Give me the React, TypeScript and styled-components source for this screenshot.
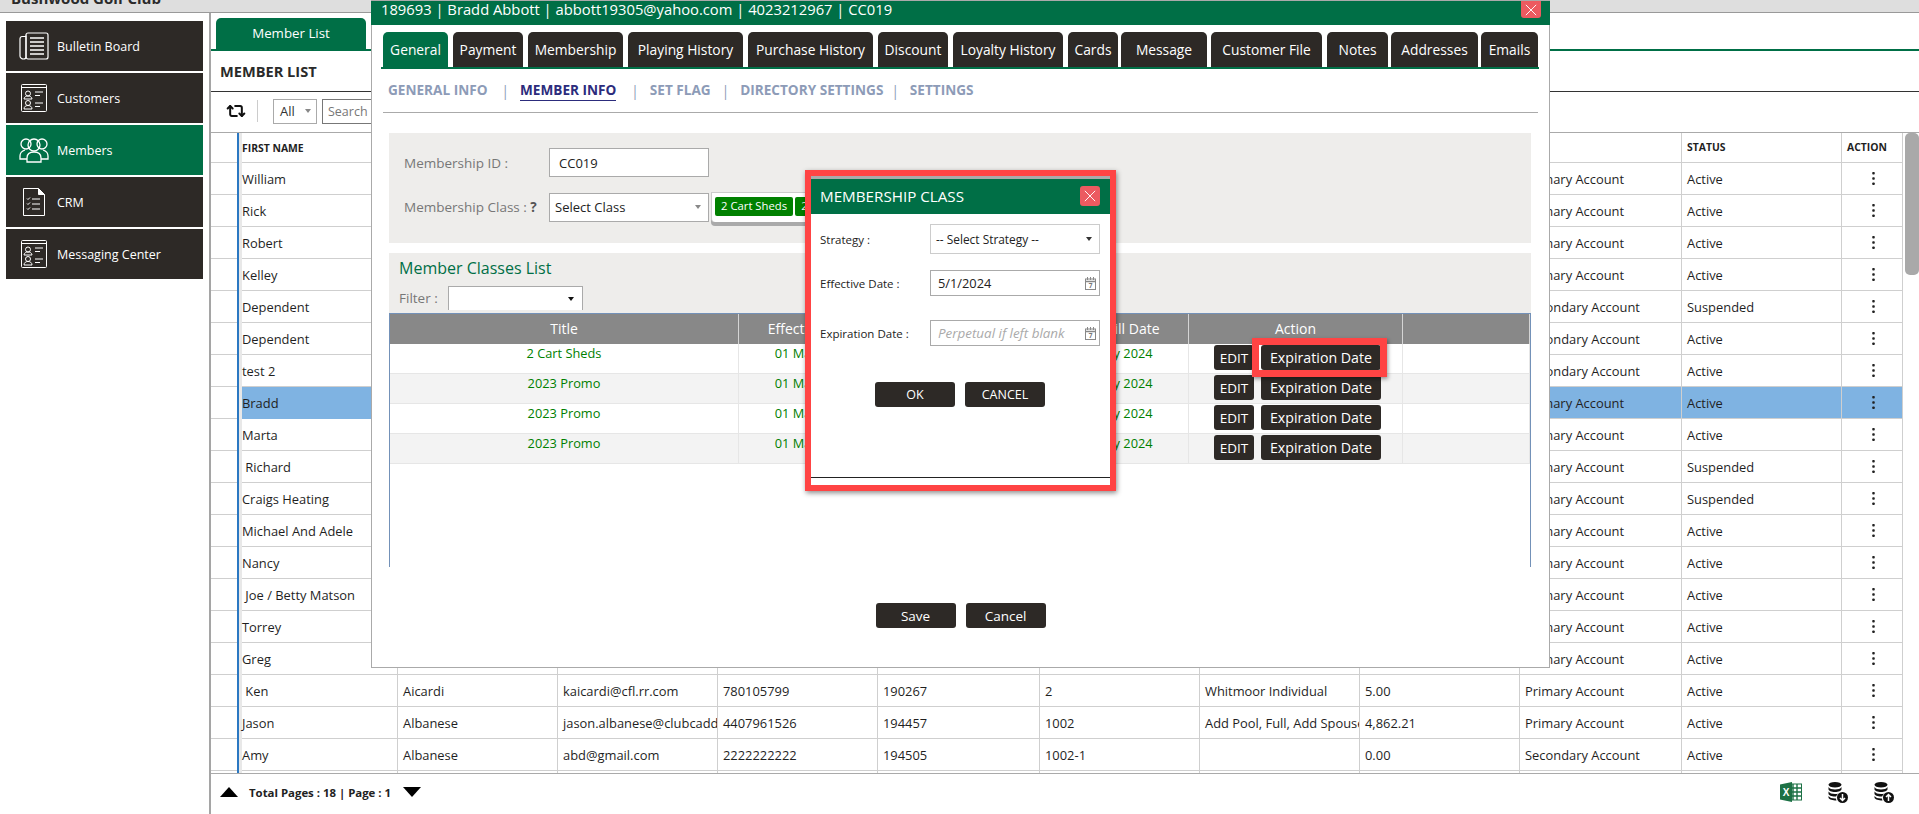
import React, { FC } from "react";
import styled, { createGlobalStyle } from "styled-components";
import { Repeat2 } from "lucide-react";

const GREEN = "#006f46";
const DARK = "#2d2926";
const FONT = `"Open Sans", "Noto Sans", "Liberation Sans", sans-serif`;

const GlobalStyle = createGlobalStyle`
  html, body {
    margin: 0;
    height: 100%;
    overflow: hidden;
    background: #fff;
    font-family: ${FONT};
    font-size: 13px;
    color: #222;
  }
  * { box-sizing: border-box; }
`;

//Page frame
const Page = styled.div`
  position: relative;
  width: 1919px;
  height: 814px;
  display: flex;
  flex-direction: column;
  overflow: hidden;
`;

const TopBar = styled.div`
  height: 13px;
  flex: none;
  background: #dedede;
  border-bottom: 1px solid #999;
  overflow: hidden;
  padding-left: 11px;
`;

const ClubName = styled.div`
  margin-top: -13px;
  line-height: 22px;
  font-size: 15px;
  font-weight: 700;
  color: #2a2a2a;
`;

const Body = styled.div`
  flex: 1;
  display: flex;
  min-height: 0;
`;

//Sidebar
const Sidebar = styled.nav`
  width: 209px;
  flex: none;
  padding: 8px 6px 0;
  display: flex;
  flex-direction: column;
  gap: 2px;
`;

const NavItem = styled.div<{ $active?: boolean }>`
  height: 50px;
  display: flex;
  align-items: center;
  background: ${(p) => (p.$active ? GREEN : DARK)};
  color: #fff;
  font-size: 12.5px;
`;

const NavIcon = styled.span`
  width: 51px;
  flex: none;
  display: flex;
  justify-content: center;
  padding-left: 5px;
`;

//Main list
const Main = styled.main`
  flex: 1;
  min-width: 0;
  display: flex;
  flex-direction: column;
  border-left: 2px solid #a5a5a5;
`;

const TabStrip = styled.div`
  height: 38px;
  flex: none;
  padding: 5px 0 0 5px;
  border-bottom: 2px solid ${GREEN};
`;

const ListTab = styled.div`
  width: 150px;
  height: 33px;
  background: ${GREEN};
  color: #fff;
  border-radius: 5px 5px 0 0;
  display: flex;
  align-items: center;
  justify-content: center;
  font-size: 13.3px;
  padding-bottom: 3px;
`;

const Heading = styled.h1`
  margin: 0;
  height: 41px;
  flex: none;
  padding: 0 0 1px 9px;
  display: flex;
  align-items: center;
  border-bottom: 1px solid #333;
  font-size: 14.6px;
  font-weight: 700;
  color: #2a2a2a;
`;

const Toolbar = styled.div`
  height: 41px;
  flex: none;
  display: flex;
  align-items: center;
  padding: 0 0 2px 15px;
  border-bottom: 1px solid #aaa;
`;

const ToolDivider = styled.span`
  width: 1px;
  height: 22px;
  background: #ccc;
  margin: 0 15px 0 11px;
`;

const AllSelect = styled.div`
  width: 44px;
  height: 25px;
  border: 1px solid #aaa;
  display: flex;
  align-items: center;
  justify-content: space-between;
  padding: 0 5px 0 6px;
  font-size: 13px;
  color: #333;
`;

const SmallCaret = styled.i<{ $color?: string }>`
  width: 0;
  height: 0;
  border-left: 3.5px solid transparent;
  border-right: 3.5px solid transparent;
  border-top: 4px solid ${(p) => p.$color || "#888"};
`;

const SearchBox = styled.div`
  width: 200px;
  height: 25px;
  margin-left: 5px;
  border: 1px solid #777;
  padding-left: 5px;
  font-size: 12.5px;
  line-height: 23px;
  color: #777;
`;

const GridArea = styled.div`
  height: 640px;
  flex: none;
  display: flex;
  overflow: hidden;
`;

const Grid = styled.div`
  width: 1692px;
  flex: none;
  overflow: hidden;
`;

const ScrollTrack = styled.div`
  flex: 1;
  padding-left: 2px;
`;

const ScrollThumb = styled.div`
  width: 14px;
  height: 142px;
  background: #a9a9a9;
  border-radius: 5px;
`;

const GridRow = styled.div<{ $header?: boolean }>`
  display: grid;
  grid-template-columns: 26px 161px 160px 160px 160px 162px 160px 160px 160px 162px 160px 61px;
  height: ${(p) => (p.$header ? "30px" : "32px")};
  border-bottom: 1px solid #cfcfcf;
  font-size: ${(p) => (p.$header ? "10.4px" : "12.9px")};
  font-weight: ${(p) => (p.$header ? 700 : 400)};
`;

const Gutter = styled.div``;

const GridCell = styled.div<{ $selected?: boolean; $header?: boolean }>`
  display: flex;
  align-items: center;
  padding-left: 5px;
  padding-bottom: ${(p) => (p.$header ? "1px" : 0)};
  border-right: 1px solid #cfcfcf;
  white-space: nowrap;
  overflow: hidden;
  color: #1f1f1f;
  background: ${(p) => (p.$selected ? "#7fb3e2" : "transparent")};
`;

const NameCell = styled(GridCell)`
  padding-left: 3px;
  border-left: 2px solid #2b78c2;
  box-shadow: inset 3px 0 0 #e8e8e8;
  margin-bottom: -1px;
`;

const ActionCell = styled(GridCell)`
  justify-content: center;
  padding: 0 0 1px 2px;
`;

const GridFooter = styled.footer`
  flex: 1;
  border-top: 1px solid #aaa;
  display: flex;
  align-items: center;
  padding: 0 25px 4px 9px;
`;

const Triangle = styled.i<{ $down?: boolean }>`
  width: 0;
  height: 0;
  border-left: 9px solid transparent;
  border-right: 9px solid transparent;
  ${(p) => (p.$down ? "border-top: 10px solid #000;" : "border-bottom: 10px solid #000;")}
`;

const PageInfo = styled.span`
  margin: 0 12px 0 11px;
  font-size: 11.4px;
  font-weight: 700;
  color: #222;
`;

const FooterIcons = styled.div`
  margin-left: auto;
  display: flex;
  align-items: center;
  gap: 26px;
`;

//Customer modal
const Modal = styled.section`
  position: absolute;
  left: 371px;
  top: 0;
  width: 1179px;
  height: 668px;
  background: #fff;
  border: 1px solid #aaa;
  display: flex;
  flex-direction: column;
`;

const ModalTitle = styled.header`
  height: 24px;
  flex: none;
  background: ${GREEN};
  color: #fff;
  font-size: 14.75px;
  display: flex;
  justify-content: space-between;
  padding: 0 9px 0 10px;
  line-height: 16px;
  margin: 0 -1px 0 -1px;
`;

const CloseButton = styled.button<{ $h: number }>`
  width: 20px;
  height: ${(p) => p.$h}px;
  padding: 0;
  border: 0;
  border-radius: 0 0 3px 3px;
  background: #ec5a60;
  display: flex;
  align-items: center;
  justify-content: center;
`;

const TabRow = styled.div`
  margin: 7px 10px 0 9px;
  padding-left: 2px;
  height: 37px;
  flex: none;
  display: flex;
  border-bottom: 2px solid ${GREEN};
`;

const ModalTab = styled.div<{ $w: number; $gap: number; $active?: boolean }>`
  width: ${(p) => p.$w}px;
  margin-right: ${(p) => p.$gap}px;
  height: 35px;
  flex: none;
  border-radius: 5px 5px 0 0;
  background: ${(p) => (p.$active ? GREEN : DARK)};
  color: #fff;
  font-size: 13.8px;
  display: flex;
  align-items: center;
  justify-content: center;
  white-space: nowrap;
`;

const SubNav = styled.div`
  margin: 0 11px 0 11px;
  height: 44px;
  flex: none;
  display: flex;
  align-items: center;
  border-bottom: 1px solid #aaa;
  padding: 0 0 1px 5px;
  font-size: 13.6px;
  font-weight: 700;
  color: #8d9bb7;
`;

const SubLink = styled.span<{ $active?: boolean }>`
  color: ${(p) => (p.$active ? "#2c2c7c" : "#8d9bb7")};
  padding-bottom: 1px;
  border-bottom: 1px solid ${(p) => (p.$active ? "#2c2c7c" : "transparent")};
`;

const SubSep = styled.span<{ $l: number; $r: number }>`
  margin: 0 ${(p) => p.$r}px 0 ${(p) => p.$l}px;
  font-weight: 400;
`;

const InfoPanel = styled.div`
  margin: 20px 0 0 17px;
  width: 1142px;
  height: 110px;
  flex: none;
  background: #eeedeb;
  padding: 15px 0 0 15px;
  display: flex;
  flex-direction: column;
  gap: 15px;
`;

const FormRow = styled.div`
  display: flex;
  align-items: center;
`;

const FormLabel = styled.label`
  width: 145px;
  flex: none;
  font-size: 13.5px;
  color: #777;
`;

const Strong = styled.b`
  color: #555;
`;

const TextBox = styled.div<{ $pad: number }>`
  width: 160px;
  height: 29px;
  flex: none;
  background: #fff;
  border: 1px solid #aaa;
  display: flex;
  align-items: center;
  justify-content: space-between;
  padding: 0 7px 0 ${(p) => p.$pad}px;
  font-size: 13px;
  color: #222;
`;

const ChipBox = styled.div`
  width: 250px;
  height: 30px;
  margin-left: 2px;
  padding: 4px 3px;
  background: #fff;
  border: 1px solid #ccc;
  border-bottom: 0;
  border-radius: 0 0 4px 4px;
  box-shadow: 0 4px 0 #aaa;
  display: flex;
  gap: 2px;
`;

const Chip = styled.span`
  height: 19px;
  padding: 0 6px;
  background: #008000;
  border-radius: 2px;
  color: #fff;
  font-size: 11.3px;
  line-height: 18px;
  white-space: nowrap;
`;

const ClassPanel = styled.div`
  margin: 10px 0 0 17px;
  width: 1142px;
  flex: none;
`;

const ClassHead = styled.div`
  height: 60px;
  background: #eeedeb;
  padding: 5px 0 0 10px;
`;

const ClassTitle = styled.h2`
  margin: 0;
  font-size: 16px;
  line-height: 21px;
  font-weight: 400;
  color: ${GREEN};
`;

const FilterRow = styled.div`
  margin-top: 7px;
  display: flex;
  align-items: flex-start;
  font-size: 13.5px;
  color: #777;
  line-height: 24px;
`;

const FilterSelect = styled.div`
  width: 135px;
  height: 24px;
  margin-left: 10px;
  background: #fff;
  border: 1px solid #aaa;
  border-bottom: 0;
  display: flex;
  align-items: center;
  justify-content: flex-end;
  padding-right: 8px;
`;

const ClassTable = styled.div`
  height: 254px;
  border: 1px solid #7391b8;
  border-bottom: 0;
`;

const ClassRow = styled.div<{ $header?: boolean; $alt?: boolean }>`
  display: grid;
  grid-template-columns: 349px 148px 190px 112px 214px 127px;
  height: 30px;
  background: ${(p) => (p.$header ? "#888" : p.$alt ? "#f3f3f3" : "#fff")};
  color: ${(p) => (p.$header ? "#fff" : "#008000")};
  font-size: ${(p) => (p.$header ? "14px" : "12.8px")};
  border-bottom: ${(p) => (p.$header ? 0 : "1px solid #e6e6e6")};
`;

const ClassCell = styled.div<{ $header?: boolean; $right?: boolean }>`
  text-align: ${(p) => (p.$right ? "right" : "center")};
  padding-right: ${(p) => (p.$right ? "36px" : 0)};
  line-height: ${(p) => (p.$header ? "30px" : "19px")};
  border-right: 1px solid ${(p) => (p.$header ? "#d5d5d5" : "#e6e6e6")};
  white-space: nowrap;
  overflow: hidden;
`;

const ActionsCell = styled(ClassCell)`
  display: flex;
  justify-content: flex-start;
  gap: 7px;
  padding: 1px 0 0 25px;
  overflow: visible;
`;

const DarkButton = styled.button<{ $w: number; $h?: number; $size?: number }>`
  width: ${(p) => p.$w}px;
  height: ${(p) => p.$h || 25}px;
  flex: none;
  padding: 0;
  border: 0;
  border-radius: 3px;
  background: ${DARK};
  color: #fff;
  font-family: ${FONT};
  font-size: ${(p) => p.$size || 14}px;
  position: relative;
`;

const HighlightBox = styled.span`
  position: absolute;
  z-index: 2;
  inset: -7px -6px -7px -9px;
  border: 7px solid #ff4444;
  box-shadow: 1px 2px 4px rgba(0, 0, 0, 0.4);
  pointer-events: none;
`;

const ModalFooter = styled.div`
  margin-top: 36px;
  display: flex;
  justify-content: center;
  gap: 10px;
`;

//Small dialog on top of the modal
const DialogFrame = styled.div`
  position: absolute;
  z-index: 3;
  left: 433px;
  top: 169px;
  width: 311px;
  height: 321px;
  border: 6px solid #ff4444;
  box-shadow: 1px 2px 5px rgba(0, 0, 0, 0.45);
  background: #fff;
  display: flex;
  flex-direction: column;
`;

const DialogTop = styled.div`
  height: 3px;
  flex: none;
  background: #aaa;
`;

const DialogHeader = styled.header`
  height: 35px;
  flex: none;
  background: ${GREEN};
  color: #fff;
  padding: 0 10px 2px 9px;
  display: flex;
  align-items: center;
  justify-content: space-between;
  font-size: 15.2px;
`;

const DialogClose = styled(CloseButton)`
  border-radius: 3px;
`;

const DialogBody = styled.div`
  height: 264px;
  flex: none;
  padding: 10px 10px 0 9px;
  display: flex;
  flex-direction: column;
  border-bottom: 1px solid #222;
`;

const DialogRow = styled.div<{ $mb: number }>`
  display: flex;
  align-items: center;
  margin-bottom: ${(p) => p.$mb}px;
`;

const DialogLabel = styled.label`
  width: 110px;
  flex: none;
  font-size: 11.5px;
  color: #222;
`;

const DialogField = styled.div<{ $h: number; $light?: boolean }>`
  width: 170px;
  height: ${(p) => p.$h}px;
  border: 1px solid ${(p) => (p.$light ? "#ccc" : "#aaa")};
  display: flex;
  align-items: center;
  justify-content: space-between;
  padding: 0 ${(p) => (p.$light ? 7 : 3)}px 0 ${(p) => (p.$light ? 5 : 7)}px;
  font-size: 12.8px;
  color: #222;
`;

const SelectText = styled.span`
  font-size: 11.9px;
`;

const Placeholder = styled.span`
  font-style: italic;
  font-size: 13.4px;
  color: #aaa;
  white-space: nowrap;
`;

const DialogActions = styled.div`
  margin-top: 22px;
  display: flex;
  justify-content: center;
  gap: 10px;
`;

//Icons
const NewspaperIcon: FC = () => (
  <svg width="30" height="28" viewBox="0 0 30 28" fill="none" stroke="#fff" strokeWidth="1.2">
    <path d="M7 3.5V25c0 1.5-1 2-2.5 2S1 26 1 24V7c0-1.5 1-2.5 2-2.5h4" />
    <rect x="7" y="1" width="22" height="26" rx="2" />
    <path d="M11 6h14M11 10h14M11 14h14M11 18h14M11 22h14" strokeWidth="1.6" />
  </svg>
);

const CardIcon: FC = () => (
  <svg width="26" height="28" viewBox="0 0 26 28" fill="none" stroke="#fff" strokeWidth="1">
    <rect x="0.5" y="0.5" width="25" height="27" rx="1" />
    <path d="M0.5 3.5h25" />
    <circle cx="7" cy="9.5" r="2.5" />
    <path d="M3 15c0-2 2-3 4-3s4 1 4 3z" />
    <circle cx="7" cy="19" r="2.5" />
    <path d="M3 25c0-2.5 2-3.5 4-3.5s4 1 4 3.5z" />
    <path d="M14 8h8M14 11.5h5M14 19h8M14 22.5h5" />
  </svg>
);

const MembersIcon: FC = () => (
  <svg width="30" height="26" viewBox="0 0 30 26" fill="none" stroke="#fff" strokeWidth="1.3">
    <circle cx="15" cy="8" r="6" />
    <circle cx="7" cy="7" r="5" />
    <circle cx="23" cy="7" r="5" />
    <path d="M8 25v-4c0-4 3-6 7-6s7 2 7 6v4z" fill={GREEN} />
    <path d="M8 22H1v-3c0-3 2-5 5-6M22 22h7v-3c0-3-2-5-5-6" />
  </svg>
);

const ChecklistIcon: FC = () => (
  <svg width="22" height="28" viewBox="0 0 22 28" fill="none" stroke="#fff" strokeWidth="1">
    <path d="M0.5 0.5h15l6 6v21H0.5z" />
    <path d="M15.5 0.5v6h6" fill="#fff" />
    <path d="M4 10.5l1 1 2-2M9 11h8M4 15.5l1 1 2-2M9 16h8M4 20.5l1 1 2-2M9 21h8" />
  </svg>
);

const CrossIcon: FC<{ size: number }> = ({ size }) => (
  <svg width={size} height={size} viewBox="0 0 14 14" stroke="#fff" strokeWidth="1.1">
    <path d="M1 1l12 12M13 1L1 13" />
  </svg>
);

const KebabIcon: FC = () => (
  <svg width="3" height="13" viewBox="0 0 3 13" fill="#222">
    <rect x="0.25" y="0" width="2.5" height="2.5" rx="0.8" />
    <rect x="0.25" y="5.2" width="2.5" height="2.5" rx="0.8" />
    <rect x="0.25" y="10.5" width="2.5" height="2.5" rx="0.8" />
  </svg>
);

const CalendarIcon: FC = () => (
  <svg width="11" height="13" viewBox="0 0 11 13" fill="none" stroke="#888" strokeWidth="1">
    <rect x="0.5" y="2" width="10" height="10.5" />
    <path d="M0.5 4.5h10" strokeWidth="1.5" />
    <path d="M2.5 0v3M5.5 0v3M8.5 0v3" />
    <text x="5.5" y="11" fontSize="6.5" fill="#777" stroke="none" textAnchor="middle" fontWeight="700">7</text>
  </svg>
);

const ExcelIcon: FC = () => (
  <svg width="22" height="20" viewBox="0 0 22 20">
    <rect x="10" y="2" width="11.5" height="16" fill="#fff" stroke="#1d7145" />
    <path d="M13 2v16M17 2v16M10 6h11M10 10h11M10 14h11" stroke="#1d7145" strokeWidth="1.4" />
    <path d="M0 2.5L12 0v20L0 17.5z" fill="#1d7145" />
    <text x="6" y="14" fontSize="10" fontWeight="700" fill="#fff" textAnchor="middle" fontFamily="Liberation Sans">X</text>
  </svg>
);

const DatabaseIcon: FC<{ up?: boolean }> = ({ up }) => (
  <svg width="20" height="21" viewBox="0 0 20 21" fill="#111">
    <ellipse cx="7" cy="2.8" rx="6.5" ry="2.8" />
    <path d="M0.5 5c1 1.8 3.5 2.5 6.5 2.5S12.5 6.8 13.5 5v2.2c0 1.6-3 2.8-6.5 2.8S.5 8.8.5 7.2z" />
    <path d="M0.5 9.500C1.500 11.200 4 12 7 12c1 0 2-.1 3-.3-1 .9-1.600 1.900-1.900 2.800H7c-3.500 0-6.500-1.200-6.500-2.800z" />
    <path d="M0.5 14c1 1.700 3.500 2.500 6.500 2.500h.9c.1.700.3 1.300.6 1.900H7c-3.500 0-6.500-1.200-6.500-2.800z" />
    <circle cx="14.5" cy="15.5" r="5.5" />
    <path d={up ? "M14.5 19v-6M12 15l2.500-2.500L17 15" : "M14.5 12v6M12 16l2.500 2.500L17 16"} stroke="#fff" strokeWidth="1.5" fill="none" />
  </svg>
);

//Data
const NAV_ITEMS = [
  { label: "Bulletin Board", icon: <NewspaperIcon /> },
  { label: "Customers", icon: <CardIcon /> },
  { label: "Members", icon: <MembersIcon />, active: true },
  { label: "CRM", icon: <ChecklistIcon /> },
  { label: "Messaging Center", icon: <CardIcon /> },
];

const HEADERS = ["FIRST NAME", "LAST NAME", "EMAIL", "PHONE", "CUSTOMER ID", "MEMBER ID", "MEMBERSHIP", "BALANCE", "TYPE", "STATUS", "ACTION"];

const PRIMARY = "Primary Account";
const SECONDARY = "Secondary Account";

const MEMBERS: string[][] = [
  ["William", "", "", "", "", "", "", "", PRIMARY, "Active"],
  ["Rick", "", "", "", "", "", "", "", PRIMARY, "Active"],
  ["Robert", "", "", "", "", "", "", "", PRIMARY, "Active"],
  ["Kelley", "", "", "", "", "", "", "", PRIMARY, "Active"],
  ["Dependent", "", "", "", "", "", "", "", SECONDARY, "Suspended"],
  ["Dependent", "", "", "", "", "", "", "", SECONDARY, "Active"],
  ["test 2", "", "", "", "", "", "", "", SECONDARY, "Active"],
  ["Bradd", "", "", "", "", "", "", "", PRIMARY, "Active"],
  ["Marta", "", "", "", "", "", "", "", PRIMARY, "Active"],
  ["\u00a0Richard", "", "", "", "", "", "", "", PRIMARY, "Suspended"],
  ["Craigs Heating", "", "", "", "", "", "", "", PRIMARY, "Suspended"],
  ["Michael And Adele", "", "", "", "", "", "", "", PRIMARY, "Active"],
  ["Nancy", "", "", "", "", "", "", "", PRIMARY, "Active"],
  ["\u00a0Joe / Betty Matson", "", "", "", "", "", "", "", PRIMARY, "Active"],
  ["Torrey", "", "", "", "", "", "", "", PRIMARY, "Active"],
  ["Greg", "", "", "", "", "", "", "", PRIMARY, "Active"],
  ["\u00a0Ken", "Aicardi", "kaicardi@cfl.rr.com", "780105799", "190267", "2", "Whitmoor Individual", "5.00", PRIMARY, "Active"],
  ["Jason", "Albanese", "jason.albanese@clubcaddie.com", "4407961526", "194457", "1002", "Add Pool, Full, Add Spouse", "4,862.21", PRIMARY, "Active"],
  ["Amy", "Albanese", "abd@gmail.com", "2222222222", "194505", "1002-1", "", "0.00", SECONDARY, "Active"],
];

const TABS = [
  { label: "General", w: 65, gap: 5, active: true },
  { label: "Payment", w: 70, gap: 5 },
  { label: "Membership", w: 95, gap: 5 },
  { label: "Playing History", w: 115, gap: 5 },
  { label: "Purchase History", w: 125, gap: 5 },
  { label: "Discount", w: 70, gap: 5 },
  { label: "Loyalty History", w: 110, gap: 5 },
  { label: "Cards", w: 50, gap: 3 },
  { label: "Message", w: 86, gap: 4 },
  { label: "Customer File", w: 111, gap: 5 },
  { label: "Notes", w: 61, gap: 3 },
  { label: "Addresses", w: 87, gap: 3 },
  { label: "Emails", w: 57, gap: 0 },
];

const CLASSES = ["2 Cart Sheds", "2023 Promo", "2023 Promo", "2023 Promo"];

const App: FC = () => {
  return (
    <Page>
      <GlobalStyle />
      <TopBar>
        <ClubName>Bushwood Golf Club</ClubName>
      </TopBar>
      <Body>
        <Sidebar>
          {NAV_ITEMS.map((item) => (
            <NavItem key={item.label} $active={item.active}>
              <NavIcon>{item.icon}</NavIcon>
              {item.label}
            </NavItem>
          ))}
        </Sidebar>
        <Main>
          <TabStrip>
            <ListTab>Member List</ListTab>
          </TabStrip>
          <Heading>MEMBER LIST</Heading>
          <Toolbar>
            <Repeat2 size={20} strokeWidth={2.4} color="#111" />
            <ToolDivider />
            <AllSelect>
              All
              <SmallCaret />
            </AllSelect>
            <SearchBox>Search by</SearchBox>
          </Toolbar>
          <GridArea>
            <Grid>
              <GridRow $header>
                <Gutter />
                <NameCell $header>{HEADERS[0]}</NameCell>
                {HEADERS.slice(1).map((h) => (
                  <GridCell key={h} $header>{h}</GridCell>
                ))}
              </GridRow>
              {MEMBERS.map((row, i) => {
                const selected = row[0] === "Bradd";
                return (
                  <GridRow key={i}>
                    <Gutter />
                    <NameCell $selected={selected}>{row[0]}</NameCell>
                    {row.slice(1).map((value, c) => (
                      <GridCell key={c} $selected={selected}>{value}</GridCell>
                    ))}
                    <ActionCell $selected={selected}>
                      <KebabIcon />
                    </ActionCell>
                  </GridRow>
                );
              })}
              <GridRow>
                <Gutter />
                <NameCell />
                {HEADERS.slice(1).map((h) => (
                  <GridCell key={h} />
                ))}
              </GridRow>
            </Grid>
            <ScrollTrack>
              <ScrollThumb />
            </ScrollTrack>
          </GridArea>
          <GridFooter>
            <Triangle />
            <PageInfo>Total Pages : 18 | Page : 1</PageInfo>
            <Triangle $down />
            <FooterIcons>
              <ExcelIcon />
              <DatabaseIcon />
              <DatabaseIcon up />
            </FooterIcons>
          </GridFooter>
        </Main>
      </Body>

      <Modal>
        <ModalTitle>
          <span>189693 | Bradd Abbott | abbott19305@yahoo.com | 4023212967 | CC019</span>
          <CloseButton $h={17}>
            <CrossIcon size={12} />
          </CloseButton>
        </ModalTitle>
        <TabRow>
          {TABS.map((tab) => (
            <ModalTab key={tab.label} $w={tab.w} $gap={tab.gap} $active={tab.active}>
              {tab.label}
            </ModalTab>
          ))}
        </TabRow>
        <SubNav>
          <SubLink>GENERAL INFO</SubLink>
          <SubSep $l={14} $r={11}>|</SubSep>
          <SubLink $active>MEMBER INFO</SubLink>
          <SubSep $l={15} $r={11}>|</SubSep>
          <SubLink>SET FLAG</SubLink>
          <SubSep $l={11} $r={11}>|</SubSep>
          <SubLink>DIRECTORY SETTINGS</SubLink>
          <SubSep $l={8} $r={11}>|</SubSep>
          <SubLink>SETTINGS</SubLink>
        </SubNav>
        <InfoPanel>
          <FormRow>
            <FormLabel>Membership ID :</FormLabel>
            <TextBox $pad={9}>CC019</TextBox>
          </FormRow>
          <FormRow>
            <FormLabel>Membership Class : <Strong>?</Strong></FormLabel>
            <TextBox $pad={5}>
              Select Class
              <SmallCaret />
            </TextBox>
            <ChipBox>
              <Chip>2 Cart Sheds</Chip>
              <Chip>2023 Promo</Chip>
            </ChipBox>
          </FormRow>
        </InfoPanel>
        <ClassPanel>
          <ClassHead>
            <ClassTitle>Member Classes List</ClassTitle>
            <FilterRow>
              Filter :
              <FilterSelect>
                <SmallCaret $color="#111" />
              </FilterSelect>
            </FilterRow>
          </ClassHead>
          <ClassTable>
            <ClassRow $header>
              <ClassCell $header>Title</ClassCell>
              <ClassCell $header>Effective Date</ClassCell>
              <ClassCell $header>Expiration Date</ClassCell>
              <ClassCell $header>Bill Date</ClassCell>
              <ClassCell $header>Action</ClassCell>
              <ClassCell $header />
            </ClassRow>
            {CLASSES.map((title, i) => (
              <ClassRow key={i} $alt={i % 2 === 1}>
                <ClassCell>{title}</ClassCell>
                <ClassCell>01 May 2024</ClassCell>
                <ClassCell />
                <ClassCell $right>01 May 2024</ClassCell>
                <ActionsCell>
                  <DarkButton $w={40} $size={13.5}>EDIT</DarkButton>
                  <DarkButton $w={120} $size={14.2}>
                    Expiration Date
                    {i === 0 && <HighlightBox />}
                  </DarkButton>
                </ActionsCell>
                <ClassCell />
              </ClassRow>
            ))}
          </ClassTable>
        </ClassPanel>
        <ModalFooter>
          <DarkButton $w={80} $size={13.5}>Save</DarkButton>
          <DarkButton $w={80} $size={13.5}>Cancel</DarkButton>
        </ModalFooter>

        <DialogFrame>
          <DialogTop />
          <DialogHeader>
            MEMBERSHIP CLASS
            <DialogClose $h={20}>
              <CrossIcon size={12} />
            </DialogClose>
          </DialogHeader>
          <DialogBody>
            <DialogRow $mb={16}>
              <DialogLabel>Strategy :</DialogLabel>
              <DialogField $h={30} $light>
                <SelectText>-- Select Strategy --</SelectText>
                <SmallCaret $color="#333" />
              </DialogField>
            </DialogRow>
            <DialogRow $mb={24}>
              <DialogLabel>Effective Date :</DialogLabel>
              <DialogField $h={26}>
                5/1/2024
                <CalendarIcon />
              </DialogField>
            </DialogRow>
            <DialogRow $mb={14}>
              <DialogLabel>Expiration Date :</DialogLabel>
              <DialogField $h={26}>
                <Placeholder>Perpetual if left blank</Placeholder>
                <CalendarIcon />
              </DialogField>
            </DialogRow>
            <DialogActions>
              <DarkButton $w={80} $size={12.5}>OK</DarkButton>
              <DarkButton $w={80} $size={12.5}>CANCEL</DarkButton>
            </DialogActions>
          </DialogBody>
        </DialogFrame>
      </Modal>
    </Page>
  );
};

export default App;
